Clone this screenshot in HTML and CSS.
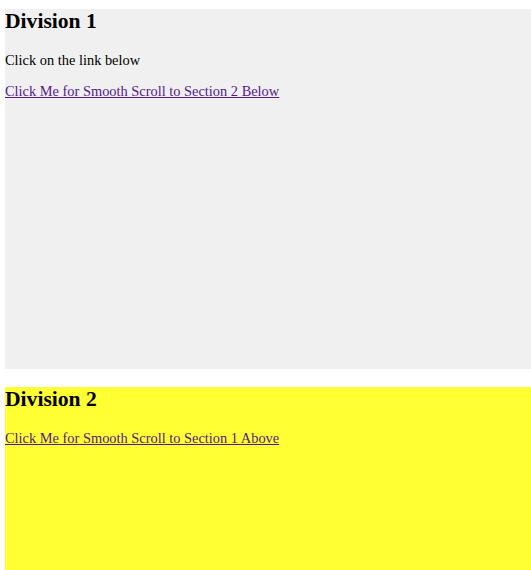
FILE: index.html
```html
<!DOCTYPE html>
<html>
<head>
<meta charset="utf-8">
<link rel="stylesheet" href="styles.css">
</head>
<body>
<div class="page">
  <div class="division division-one" id="section1">
    <h2 class="title">Division 1</h2>
    <p class="text">Click on the link below</p>
    <p class="text"><a class="link" href="#section2">Click Me for Smooth Scroll to Section 2 Below</a></p>
  </div>
  <div class="division division-two" id="section2">
    <h2 class="title">Division 2</h2>
    <p class="text"><a class="link" href="#section1">Click Me for Smooth Scroll to Section 1 Above</a></p>
  </div>
</div>
</body>
</html>
```
FILE: styles.css
```css
html, body {
  margin: 0;
  padding: 0;
  background: #ffffff;
}
body {
  font-family: "Liberation Serif", "Times New Roman", serif;
  font-size: 14.4px;
  color: #000000;
}
.page {
  padding: 9px 0 0 5px;
  display: flex;
  flex-direction: column;
  gap: 18px;
}
.division {
  height: 360px;
  display: flow-root;
}
.division-one {
  background: #f0f0f0;
}
.division-two {
  background: #ffff33;
}
.title {
  font-size: 21.6px;
  font-weight: bold;
  margin: 0 0 17.9px;
}
.text {
  margin: 14.4px 0;
}
.link {
  color: #551a8b;
}
```
